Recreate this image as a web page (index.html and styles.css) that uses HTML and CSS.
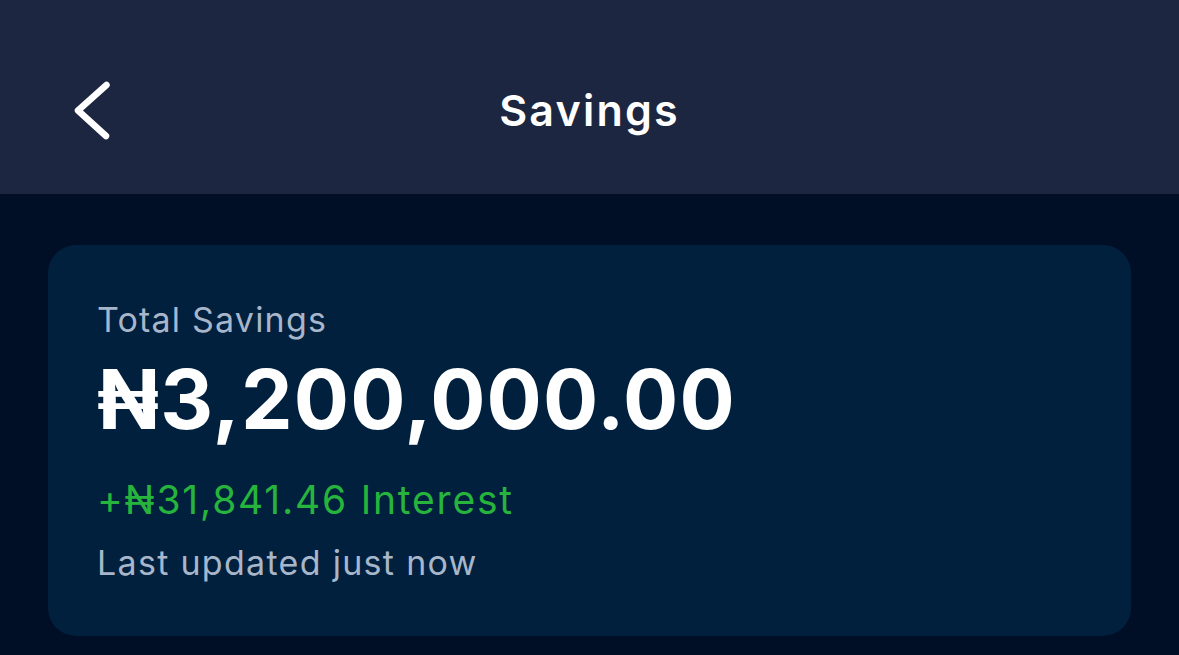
FILE: index.html
```html
<!DOCTYPE html>
<html lang="en">
  <head>
    <meta charset="UTF-8" />
    <title>Savings</title>
    <link rel="stylesheet" href="styles.css">
  </head>
  <body>
    <header class="topbar">
      <a class="back" href="#" aria-label="Back">
        <svg width="44" height="66" viewBox="0 0 44 66">
          <path d="M36.5 7 L8 32.5 L36 58" fill="none" stroke="#fff" stroke-width="6.5" stroke-linecap="round" stroke-linejoin="round" />
        </svg>
      </a>
      <h1 class="title">Savings</h1>
    </header>

    <main class="content">
      <section class="card">
        <p class="label">Total Savings</p>
        <p class="amount">₦3,200,000.00</p>
        <p class="interest">+₦31,841.46 Interest</p>
        <p class="updated">Last updated just now</p>
      </section>
    </main>
  </body>
</html>
```

FILE: styles.css
```css
body {
  font-family: Inter, "Noto Sans", sans-serif;
  background: #000f26;
  margin: 0;
  color: #fff;
}

.topbar {
  position: relative;
  height: 194px;
  box-sizing: border-box;
  padding-top: 89px;
  background: #1c2640;
  display: flex;
  justify-content: center;
  align-items: flex-start;
}

.back {
  position: absolute;
  left: 70px;
  top: 78px;
  display: block;
  line-height: 0;
}

.title {
  margin: 0;
  font-size: 43px;
  line-height: 42px;
  font-weight: 600;
  letter-spacing: 2.2px;
}

.content {
  padding: 51px 48px 0;
}

.card {
  background: #00203e;
  border-radius: 28px;
  padding: 55px 49px 53px;
}

.card p {
  margin: 0;
}

.card .label {
  font-size: 34px;
  line-height: 40px;
  letter-spacing: 1.2px;
  color: #a8b6ca;
}

.card .amount {
  margin-top: 12px;
  font-size: 82px;
  line-height: 96px;
  font-weight: 700;
  letter-spacing: 1.1px;
}

.card .interest {
  margin-top: 30px;
  font-size: 39px;
  line-height: 44px;
  letter-spacing: 1.8px;
  color: #27b43c;
}

.card .updated {
  margin-top: 21px;
  font-size: 34px;
  line-height: 40px;
  letter-spacing: 1.3px;
  color: #a8b6ca;
}
```
